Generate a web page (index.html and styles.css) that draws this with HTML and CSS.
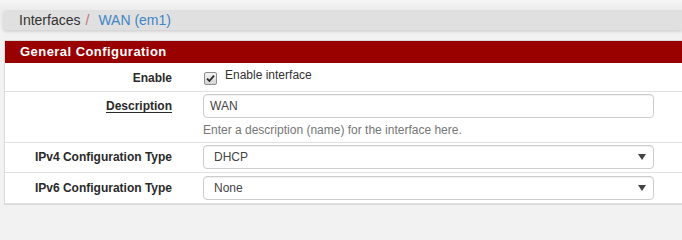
FILE: index.html
```html
<!DOCTYPE html>
<html>
<head>
<meta charset="utf-8">
<link rel="stylesheet" href="styles.css">
</head>
<body>
<div class="top">
  <div class="breadcrumb">
    <span class="crumb">Interfaces</span><span class="sep">/</span><span class="crumb active">WAN (em1)</span>
  </div>
</div>
<div class="panel">
  <div class="panel-heading">General Configuration</div>
  <div class="row row-check">
    <div class="label">Enable</div>
    <div class="field">
      <label class="check">
        <span class="box"><svg width="9" height="9" viewBox="0 0 9 9"><path d="M1 4.6 L3.4 7 L8 1.6" fill="none" stroke="#2b2b2b" stroke-width="1.8"/></svg></span>
        <span class="check-text">Enable interface</span>
      </label>
    </div>
  </div>
  <div class="row row-desc">
    <div class="label"><span class="u">Description</span></div>
    <div class="field">
      <div class="input">WAN</div>
      <div class="help">Enter a description (name) for the interface here.</div>
    </div>
  </div>
  <div class="row">
    <div class="label">IPv4 Configuration Type</div>
    <div class="field">
      <div class="select"><span>DHCP</span><svg width="8" height="6" viewBox="0 0 8 6"><path d="M0 0 H8 L4 6 Z" fill="#444"/></svg></div>
    </div>
  </div>
  <div class="row row-last">
    <div class="label">IPv6 Configuration Type</div>
    <div class="field">
      <div class="select"><span>None</span><svg width="8" height="6" viewBox="0 0 8 6"><path d="M0 0 H8 L4 6 Z" fill="#444"/></svg></div>
    </div>
  </div>
</div>
</body>
</html>
```

FILE: styles.css
```css
html, body {
  margin: 0;
  padding: 0;
  overflow: hidden;
  background: #f2f2f2;
  font-family: "Liberation Sans", Arial, sans-serif;
  color: #333;
}

.top {
  padding-top: 10px;
  background: linear-gradient(#f6f6f6, #ececec 10px, #f0f0f0 30px, #f2f2f2);
}

.breadcrumb {
  margin-left: 3px;
  height: 20px;
  background: #e0e0e0;
  border-radius: 4px 0 0 4px;
  box-shadow: 0 2px 3px rgba(0, 0, 0, 0.13);
  padding-left: 16px;
  font-size: 14px;
  line-height: 20px;
  display: flex;
}

.crumb { color: #333; }
.crumb.active { color: #3f86c6; }
.sep {
  color: #c07070;
  padding: 0 8px 0 5px;
  margin-right: 1px;
}

.panel {
  margin-top: 10px;
  margin-left: 4px;
  border: 1px solid #dadada;
  border-right: none;
  background: #fff;
}

.panel-heading {
  height: 22px;
  line-height: 22px;
  background: #990000;
  color: #fff;
  font-weight: bold;
  font-size: 13px;
  letter-spacing: 0.45px;
  padding-left: 15px;
}

.row {
  display: flex;
  align-items: flex-start;
  border-bottom: 1px solid #e0e0e0;
  padding: 2px 0 3px;
  font-size: 12px;
}

.row-last { padding-top: 3px; }

.label {
  width: 167px;
  text-align: right;
  font-weight: bold;
  line-height: 24px;
  color: #2a2a2a;
  flex: none;
}

.u { text-decoration: underline; text-underline-offset: 2px; }

.field {
  margin-left: 31px;
  width: 451px;
  flex: none;
}

.row-check {
  height: 29px;
  padding: 0;
  align-items: center;
  box-sizing: border-box;
}

.row-check .label { line-height: 16px; padding-top: 1px; }

.check {
  display: flex;
  align-items: center;
  margin-left: 1px;
}

.box {
  width: 11px;
  height: 11px;
  border: 1px solid #8e8e8e;
  border-radius: 2px;
  background: linear-gradient(#f2f2f2, #d6d6d6);
  display: flex;
  align-items: center;
  justify-content: center;
  margin-top: 2px;
}

.check-text {
  margin-left: 8px;
  position: relative;
  top: -2px;
  color: #333;
}

.input, .select {
  height: 24px;
  box-sizing: border-box;
  border: 1px solid #cccccc;
  border-radius: 4px;
  box-shadow: inset 0 1px 1px rgba(0, 0, 0, 0.06);
  color: #444;
  font-size: 12px;
  line-height: 22px;
}

.input { padding-left: 6px; }

.select {
  display: flex;
  align-items: center;
  justify-content: space-between;
  padding: 0 7px 0 10px;
}

.help {
  margin-top: 4px;
  line-height: 17px;
  color: #767676;
}
```
